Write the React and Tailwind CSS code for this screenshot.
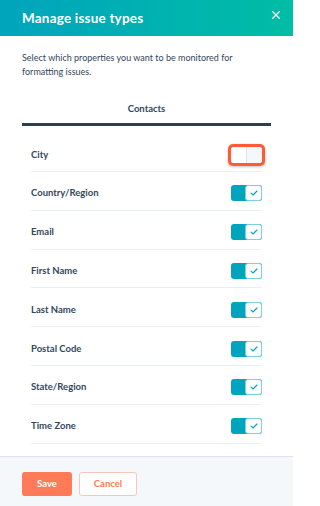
import { X } from "lucide-react";

const props = [
  { name: "City", on: false, focused: true },
  { name: "Country/Region", on: true },
  { name: "Email", on: true },
  { name: "First Name", on: true },
  { name: "Last Name", on: true },
  { name: "Postal Code", on: true },
  { name: "State/Region", on: true },
  { name: "Time Zone", on: true },
];

function Toggle({ on, focused }) {
  if (!on) {
    return (
      <div className={focused ? "rounded-[5px] bg-[#ff5c35] p-[3px] shadow-[0_1px_3px_rgba(0,0,0,0.25)]" : ""}>
        <div className="flex h-[16px] w-[31px] overflow-hidden rounded-[3px] bg-white">
          <div className="w-[15px] bg-white" />
          <div className="w-[16px] border-l border-[#dfe3eb] bg-[#f5f8fa]" />
        </div>
      </div>
    );
  }
  return (
    <div className="flex h-[16px] w-[31px] overflow-hidden rounded-[3px] bg-[#00a4bd]">
      <div className="w-[14px]" />
      <div className="flex w-[17px] items-center justify-center rounded-[3px] border border-[#7fd1de] bg-white">
        <svg width="8" height="6" viewBox="0 0 8 6" fill="none">
          <path d="M1 3.2 L3 5 L7 1" stroke="#00a4bd" strokeWidth="1.1" strokeLinecap="round" strokeLinejoin="round" />
        </svg>
      </div>
    </div>
  );
}

export default function App() {
  return (
    <div
      className="flex h-[506px] w-[293px] flex-col overflow-hidden bg-white text-[#33475b]"
      style={{ fontFamily: "Lato, 'Open Sans', sans-serif" }}
    >
      <header className="flex h-[36px] shrink-0 items-center justify-between bg-gradient-to-r from-[#00a4bd] to-[#00bda5] pl-[22px] pr-[10px]">
        <h1 className="text-[13.5px] font-bold tracking-[0.2px] text-white">Manage issue types</h1>
        <X size={14} strokeWidth={2} className="mb-[6px] text-white" aria-hidden="true" />
      </header>

      <div className="flex min-h-0 flex-1 flex-col">
        <p className="max-w-[260px] px-[22px] pt-[15px] text-[9px] leading-[14px]">
          Select which properties you want to be monitored for formatting issues.
        </p>

        <div className="mx-[22px] mt-[23px] border-b-[3px] border-[#2d3e50] pb-[7px] text-center text-[9.5px] font-bold">
          Contacts
        </div>

        <ul className="mx-[31px] mt-[7px]">
          {props.map((p) => (
            <li
              key={p.name}
              className="flex h-[38.8px] items-center justify-between border-b border-[#eaf0f6] pt-[5px] text-[9.5px] font-bold"
            >
              <span>{p.name}</span>
              <div className={p.focused ? "-mr-[3px]" : ""}>
                <Toggle on={p.on} focused={p.focused} />
              </div>
            </li>
          ))}
        </ul>
      </div>

      <footer className="flex h-[50px] shrink-0 items-start gap-[7px] border-t border-[#dfe3eb] bg-[#f5f8fa] px-[22px] pt-[15px]">
        <button
          type="button"
          className="h-[24px] w-[50px] rounded-[3px] bg-[#ff7a59] text-[9.5px] font-bold text-white"
        >
          Save
        </button>
        <button
          type="button"
          className="h-[24px] w-[58px] rounded-[3px] border border-[#f8c6b8] bg-white text-[9.5px] font-bold text-[#ff7a59]"
        >
          Cancel
        </button>
      </footer>
    </div>
  );
}
